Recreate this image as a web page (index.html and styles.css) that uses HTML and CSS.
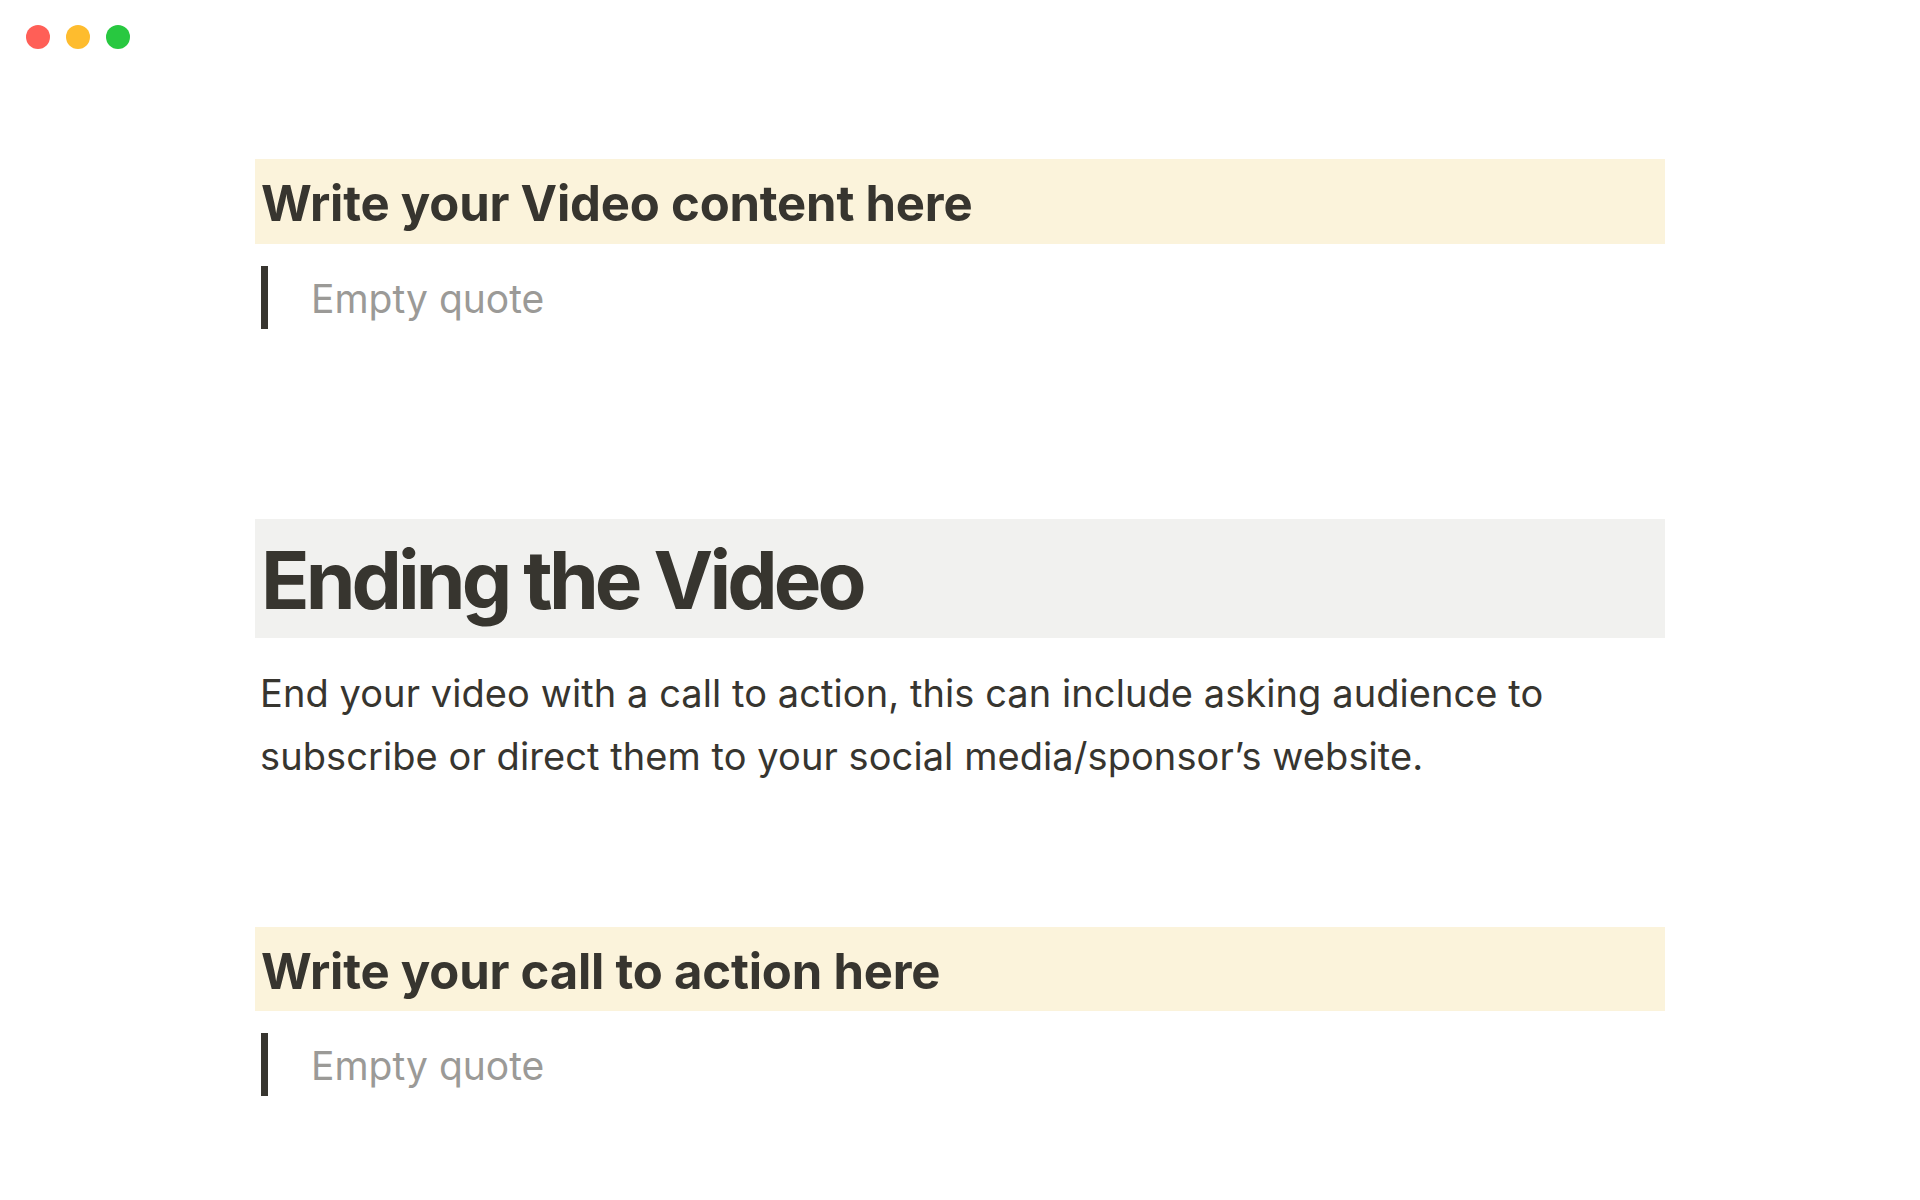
FILE: index.html
```html
<!DOCTYPE html>
<html lang="en">
<head>
  <meta charset="UTF-8">
  <meta name="viewport" content="width=device-width, initial-scale=1.0">
  <title>Ending the Video</title>
  <link rel="stylesheet" href="styles.css">
</head>
<body>
<div class="window-bar">
  <span class="dot dot-red"></span>
  <span class="dot dot-yellow"></span>
  <span class="dot dot-green"></span>
</div>

<div class="page">
  <h2 class="block-title bg-yellow">Write your Video content here</h2>
  <blockquote class="quote">Empty quote</blockquote>

  <h1 class="block-title page-heading bg-gray">Ending the Video</h1>
  <p class="text">End your video with a call to action, this can include asking audience to subscribe or direct them to your social media/sponsor’s website.</p>

  <h2 class="block-title bg-yellow cta">Write your call to action here</h2>
  <blockquote class="quote">Empty quote</blockquote>
</div>
</body>
</html>
```

FILE: styles.css
```css
:root {
  --text-color: #37352f;
  --placeholder: #9b9a97;
  --yellow-bg: #fbf3db;
  --gray-bg: #f1f1ef;
}

* {
  box-sizing: border-box;
  margin: 0;
  padding: 0;
}

body {
  background-color: white;
  color: var(--text-color);
  font-family: Inter, "Noto Sans", sans-serif;
}

.window-bar {
  display: flex;
  gap: 16px;
  padding: 25px 0 0 26px;
}

.dot {
  width: 24px;
  height: 24px;
  border-radius: 50%;
}

.dot-red {
  background-color: #ff5f57;
}

.dot-yellow {
  background-color: #febc2e;
}

.dot-green {
  background-color: #28c840;
}

.page {
  width: 1410px;
  margin: 0 auto;
  padding-top: 110px;
}

.block-title {
  font-size: 49px;
  font-weight: 700;
  line-height: 1.3;
  letter-spacing: -0.004em;
  padding: 13px 6px 8px;
}

.page-heading {
  font-size: 80px;
  line-height: 96px;
  letter-spacing: -0.049em;
  padding: 13px 6px 10px;
  margin-top: 190px;
}

.bg-yellow {
  background-color: var(--yellow-bg);
}

.bg-gray {
  background-color: var(--gray-bg);
}

.quote {
  margin: 22px 0 0 6px;
  border-left: 7px solid var(--text-color);
  padding: 2px 0 0 43px;
  font-size: 39px;
  line-height: 61px;
  color: var(--placeholder);
}

.text {
  margin-top: 24px;
  padding: 0 5px;
  font-size: 38px;
  line-height: 63px;
  letter-spacing: 0.002em;
}

.cta {
  margin-top: 139px;
}
```
